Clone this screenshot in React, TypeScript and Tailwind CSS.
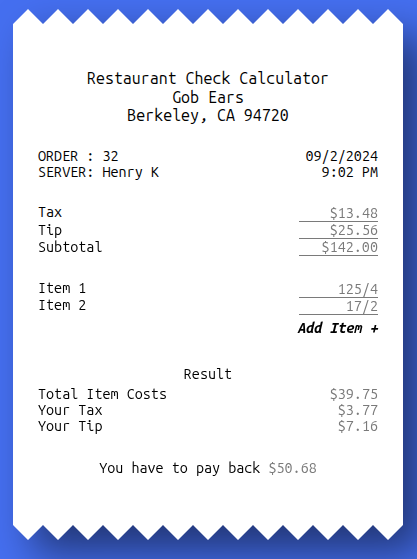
import React from "react";

const taxRows = [
  { label: "Tax", value: "$13.48" },
  { label: "Tip", value: "$25.56" },
  { label: "Subtotal", value: "$142.00" },
];

const itemRows = [
  { label: "Item 1", value: "125/4" },
  { label: "Item 2", value: "17/2" },
];

const results = [
  { label: "Total Item Costs", value: "$39.75" },
  { label: "Your Tax", value: "$3.77" },
  { label: "Your Tip", value: "$7.16" },
];

const App = () => {
  return (
    <div className="h-screen overflow-hidden bg-[#456ff0] pt-[9px] pl-[13px] font-['Ubuntu_Mono','DejaVu_Sans_Mono',monospace] text-black">
      <div className="w-[390px] drop-shadow-[20px_20px_20px_rgba(0,0,0,0.5)]">
        <div className="h-[531px] bg-white px-[25px] pt-[60px] [clip-path:polygon(0_15px,15px_0,30px_15px,45px_0,60px_15px,75px_0,90px_15px,105px_0,120px_15px,135px_0,150px_15px,165px_0,180px_15px,195px_0,210px_15px,225px_0,240px_15px,255px_0,270px_15px,285px_0,300px_15px,315px_0,330px_15px,345px_0,360px_15px,375px_0,390px_15px,390px_calc(100%_-_15px),375px_100%,360px_calc(100%_-_15px),345px_100%,330px_calc(100%_-_15px),315px_100%,300px_calc(100%_-_15px),285px_100%,270px_calc(100%_-_15px),255px_100%,240px_calc(100%_-_15px),225px_100%,210px_calc(100%_-_15px),195px_100%,180px_calc(100%_-_15px),165px_100%,150px_calc(100%_-_15px),135px_100%,120px_calc(100%_-_15px),105px_100%,90px_calc(100%_-_15px),75px_100%,60px_calc(100%_-_15px),45px_100%,30px_calc(100%_-_15px),15px_100%,0_calc(100%_-_15px))]">
          <div className="text-center text-[16px] leading-[18.5px]">
            <div>Restaurant Check Calculator</div>
            <div>Gob Ears</div>
            <div>Berkeley, CA 94720</div>
          </div>

          <div className="mt-[23px] flex justify-between text-[14.4px] leading-[16.7px]">
            <div>
              <div>ORDER : 32</div>
              <div>SERVER: Henry K</div>
            </div>
            <div className="text-right">
              <div>09/2/2024</div>
              <div>9:02 PM</div>
            </div>
          </div>

          <div className="mt-[23.5px] text-[14.4px]">
            {taxRows.map((row) => (
              <div key={row.label} className="flex h-[17.3px] items-start justify-between">
                <span className="leading-[16.3px]">{row.label}</span>
                <input
                  readOnly
                  value={row.value}
                  className="h-[17.3px] w-[79px] border-b border-[#7a7a7a] bg-transparent p-0 text-right leading-[16.3px] text-[#7a7a7a] outline-none"
                />
              </div>
            ))}
          </div>

          <div className="mt-[25px] text-[14.4px]">
            {itemRows.map((row) => (
              <div key={row.label} className="flex h-[16.7px] items-start justify-between">
                <span className="leading-[15.7px]">{row.label}</span>
                <input
                  readOnly
                  value={row.value}
                  className="h-[16.7px] w-[79px] border-b border-[#7a7a7a] bg-transparent p-0 text-right leading-[15.7px] text-[#7a7a7a] outline-none"
                />
              </div>
            ))}
            <div className="mt-[5px] text-right font-bold italic leading-[16.7px]">Add Item +</div>
          </div>

          <div className="mt-[29.3px] text-center text-[14.4px] leading-[16.7px]">Result</div>

          <div className="mt-[4.5px] text-[14.4px] leading-[15.85px]">
            {results.map((row) => (
              <div key={row.label} className="flex justify-between">
                <span>{row.label}</span>
                <span className="text-[#7a7a7a]">{row.value}</span>
              </div>
            ))}
          </div>

          <div className="mt-[25.3px] text-center text-[14.4px] leading-[16.7px]">
            You have to pay back <span className="text-[#7a7a7a]">$50.68</span>
          </div>
        </div>
      </div>
    </div>
  );
};

export default App;
